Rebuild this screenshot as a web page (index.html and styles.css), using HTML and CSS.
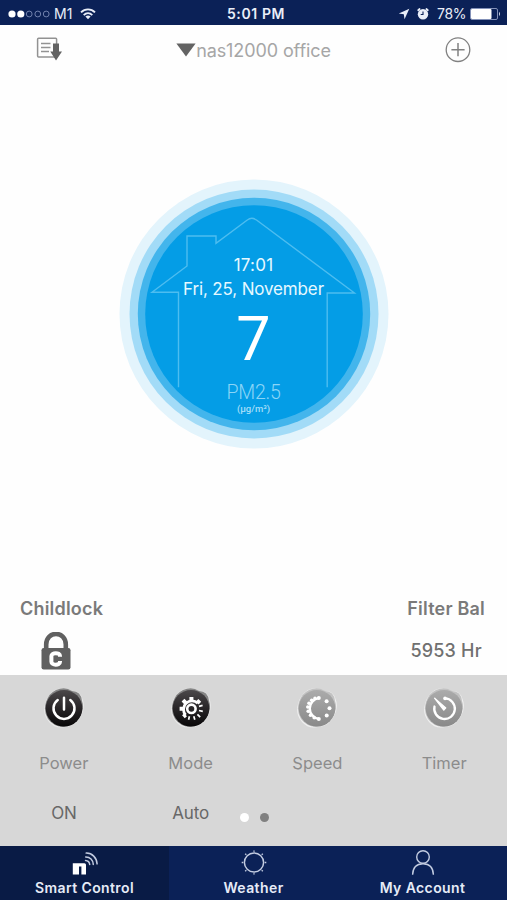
FILE: index.html
```html
<!DOCTYPE html>
<html lang="en">
<head>
  <title>Smart Control</title>
  <meta charset="UTF-8">
  <meta name="viewport" content="width=device-width, initial-scale=1">
  <link rel="stylesheet" href="styles.css">
</head>
<body>
  <div class="status-bar">
    <div class="status-left">
      <svg class="signal" width="42" height="10" viewBox="0 0 42 10">
        <g fill="#fff"><circle cx="4" cy="5" r="3.6"/><circle cx="12.8" cy="5" r="3.6"/></g>
        <g fill="none" stroke="#7c8bb5" stroke-width="0.9"><circle cx="21.2" cy="5" r="2.9"/><circle cx="29.8" cy="5" r="2.9"/><circle cx="38.2" cy="5" r="2.9"/></g>
      </svg>
      <span class="carrier">M1</span>
      <svg class="wifi" width="16" height="12" viewBox="0 0 16 12">
        <g fill="none" stroke="#e9eef8" stroke-width="1.9">
          <path d="M1 4.4C5 .4 11 .4 15 4.4"/>
          <path d="M3.7 7.1C6.2 4.7 9.8 4.7 12.3 7.1"/>
        </g>
        <path fill="#e9eef8" d="M5.4 8.6Q8 6.6 10.6 8.6L8 11.3Z"/>
      </svg>
    </div>
    <div class="clock">5:01 PM</div>
    <div class="status-right">
      <svg width="12" height="12" viewBox="0 0 12 12"><path fill="#e9eef8" d="M11.3.7 6.5 11.3 5.8 6.3.8 5.6Z"/></svg>
      <svg class="alarm" width="14" height="14" viewBox="0 0 14 14">
        <g stroke="#e9eef8" stroke-width="1.8" stroke-linecap="round"><path d="M2.2 3.2 3.6 2M11.8 3.2 10.4 2"/></g>
        <circle cx="7" cy="7.3" r="5.2" fill="#e9eef8"/>
        <path d="M7 4.4V7.5H4.7" fill="none" stroke="#0b2157" stroke-width="1.1"/>
      </svg>
      <span class="percent">78%</span>
      <svg class="battery" width="31" height="12" viewBox="0 0 31 12">
        <rect x=".5" y=".5" width="27" height="11" rx="1.5" fill="none" stroke="#8391b8"/>
        <rect x="1" y="1" width="20.5" height="10" rx="1" fill="#fff"/>
        <path d="M29 3.8Q31 6 29 8.2Z" fill="#d5dcec"/>
      </svg>
    </div>
  </div>

  <div class="header">
    <svg class="icon-list" width="26" height="26" viewBox="0 0 26 26">
      <rect x="1.6" y="1.2" width="19" height="18.8" rx="1" fill="none" stroke="#929292" stroke-width="1.5"/>
      <path d="M5 6.5H14.5M5 10.5H14.5M5 14.5H13" stroke="#929292" stroke-width="1.3"/>
      <path fill="#636363" d="M17 6.5H23V14.6H26L20 23.6 14.3 14.6H17Z"/>
    </svg>
    <div class="device-name">
      <svg width="20" height="14" viewBox="0 0 20 14"><path fill="#636363" d="M.4.5H19.6L10 13.6Z"/></svg>
      <span>nas12000 office</span>
    </div>
    <svg class="icon-add" width="26" height="26" viewBox="0 0 26 26" fill="none" stroke="#818181">
      <circle cx="13" cy="12.7" r="11.8" stroke-width="1.3"/>
      <path d="M13 6.1V19.3M6.4 12.7H19.6" stroke-width="1.5"/>
    </svg>
  </div>

  <div class="main">
    <div class="dial">
      <svg class="dial-art" width="270" height="270" viewBox="0 0 270 270">
        <circle cx="135" cy="135" r="134.5" fill="#e3f4fc"/>
        <circle cx="135" cy="135" r="124.5" fill="#a2dbf7"/>
        <circle cx="135" cy="135" r="116.2" fill="#43b5ec"/>
        <circle cx="135" cy="135" r="108.8" fill="#049de6"/>
        <path d="M59.5 208.3V113.2H33L68 87V57H97V64.3L128.3 41Q132.8 37.5 137.5 41L235.5 114H208.2V208.3" fill="none" stroke="#4dbdf0" stroke-width="1.4"/>
      </svg>
      <div class="dial-time">17:01</div>
      <div class="dial-date">Fri, 25, November</div>
      <div class="dial-value">7</div>
      <div class="dial-label">PM2.5</div>
      <div class="dial-unit">(μg/m³)</div>
    </div>
  </div>

  <div class="info">
    <div class="info-item">
      <div class="info-title childlock">Childlock</div>
      <svg class="lock" width="30" height="38" viewBox="0 0 30 38">
        <path d="M5.2 17V12.5C5.2-1.6 24.8-1.6 24.8 12.5V17" fill="none" stroke="#606060" stroke-width="4.6"/>
        <rect x=".5" y="16" width="29" height="21.5" rx="2.2" fill="#606060"/>
        <path d="M19 24.7V23.9C19 20.2 10.4 20.2 10.4 24V29.7C10.4 33.6 19 33.6 19 29.8V28.9" fill="none" stroke="#fff" stroke-width="4"/>
      </svg>
    </div>
    <div class="info-item right">
      <div class="info-title">Filter Bal</div>
      <div class="info-value">5953 Hr</div>
    </div>
  </div>

  <div class="controls">
    <div class="control">
      <svg class="knob" width="42" height="42" viewBox="0 0 42 42">
        <defs>
          <linearGradient id="dark" x1="0" y1="0" x2="0" y2="1"><stop offset="0" stop-color="#4b484a"/><stop offset=".5" stop-color="#282527"/><stop offset="1" stop-color="#080708"/></linearGradient>
          <linearGradient id="light" x1="0" y1="0" x2="0" y2="1"><stop offset="0" stop-color="#ababab"/><stop offset="1" stop-color="#898989"/></linearGradient>
        </defs>
        <path d="M12 3Q20-1 28 4Q37 3 39.5 12Q43 20 38 29Q33 39 24 39.5Q13 43 6 35Q-1 27 2 17Q4 8 12 3Z" fill="#e9e9e9"/>
        <path d="M13 3Q22-1 29 4Q38 4 39 14Q42 22 36 31Q30 39 20 40Q10 39 5 32Q0 24 3 15Q6 6 13 3Z" fill="#858585"/>
        <circle cx="21" cy="21.3" r="18.3" fill="url(#dark)"/>
        <path d="M14.7 13A10.5 10.5 0 1 0 27.3 13M21 10.8V22.5" fill="none" stroke="#fff" stroke-width="2.5" stroke-linecap="round"/>
      </svg>
      <div class="control-name">Power</div>
      <div class="control-state">ON</div>
    </div>
    <div class="control">
      <svg class="knob" width="42" height="42" viewBox="0 0 42 42">
        <path d="M12 3Q20-1 28 4Q37 3 39.5 12Q43 20 38 29Q33 39 24 39.5Q13 43 6 35Q-1 27 2 17Q4 8 12 3Z" fill="#e9e9e9"/>
        <path d="M13 3Q22-1 29 4Q38 4 39 14Q42 22 36 31Q30 39 20 40Q10 39 5 32Q0 24 3 15Q6 6 13 3Z" fill="#858585"/>
        <circle cx="21" cy="21.3" r="18.3" fill="url(#dark)"/>
        <g fill="none" stroke="#fff">
          <circle cx="21.4" cy="21.8" r="4.2" stroke-width="2.6"/>
          <path d="M15.6 28A8.5 8.5 0 0 1 27.8 16.2" stroke-width="2.8"/>
          <path d="M15.6 27.8 13.4 29.8M13.4 21.8H9.6M15.8 16 13 13.2M21.4 13.8V10M27.2 16 29.8 13.4" stroke-width="4"/>
          <path d="M29 19.4 32.6 18.4M29 23.5 32.8 24.4M27.4 27.4 30.2 30.2M23.8 29.2 24.8 32.8M19.4 29.2 18.6 32.8" stroke-width="1.7"/>
        </g>
      </svg>
      <div class="control-name">Mode</div>
      <div class="control-state">Auto</div>
    </div>
    <div class="control">
      <svg class="knob" width="42" height="42" viewBox="0 0 42 42">
        <path d="M12 3Q20-1 28 4Q37 3 39.5 12Q43 20 38 29Q33 39 24 39.5Q13 43 6 35Q-1 27 2 17Q4 8 12 3Z" fill="#f0f0f0"/>
        <path d="M13 3Q22-1 29 4Q38 4 39 14Q42 22 36 31Q30 39 20 40Q10 39 5 32Q0 24 3 15Q6 6 13 3Z" fill="#c2c2c2"/>
        <circle cx="21" cy="21.3" r="18.3" fill="url(#light)"/>
        <path d="M22.8 11.1A10.5 10.5 0 0 0 22.8 31.9" fill="none" stroke="#fff" stroke-width="2.4"/>
        <g fill="#fff"><circle cx="22.8" cy="11.1" r="2"/><circle cx="19" cy="11.4" r="1.8"/><circle cx="15.7" cy="13.3" r="1.8"/><circle cx="13" cy="16.2" r="1.8"/><circle cx="11.8" cy="20" r="1.8"/><circle cx="12.2" cy="24.2" r="1.8"/><circle cx="14.5" cy="28.2" r="1.8"/><circle cx="18.2" cy="30.8" r="1.8"/><circle cx="22.8" cy="31.9" r="2"/><circle cx="30.6" cy="14.3" r="2"/><circle cx="33.5" cy="21.3" r="2"/><circle cx="30.7" cy="28.4" r="2"/></g>
      </svg>
      <div class="control-name">Speed</div>
      <div class="control-state"></div>
    </div>
    <div class="control">
      <svg class="knob" width="42" height="42" viewBox="0 0 42 42">
        <path d="M12 3Q20-1 28 4Q37 3 39.5 12Q43 20 38 29Q33 39 24 39.5Q13 43 6 35Q-1 27 2 17Q4 8 12 3Z" fill="#f0f0f0"/>
        <path d="M13 3Q22-1 29 4Q38 4 39 14Q42 22 36 31Q30 39 20 40Q10 39 5 32Q0 24 3 15Q6 6 13 3Z" fill="#c2c2c2"/>
        <circle cx="21" cy="21.3" r="18.3" fill="url(#light)"/>
        <path d="M22 11.4A10.3 10.3 0 1 1 11.5 19.5" fill="none" stroke="#fff" stroke-width="2.3" stroke-linecap="round"/>
        <circle cx="22" cy="11.4" r="1.8" fill="#fff"/>
        <path d="M11.6 11.2 22.8 20.9 20.8 23Z" fill="#fff" stroke="#fff" stroke-width="1.3" stroke-linejoin="round"/>
      </svg>
      <div class="control-name">Timer</div>
      <div class="control-state"></div>
    </div>
    <div class="pager">
      <span class="dot active"></span>
      <span class="dot"></span>
    </div>
  </div>

  <div class="tabs">
    <div class="tab active">
      <svg width="28" height="28" viewBox="0 0 28 28">
        <path fill="#fff" d="M1.8 13.2H13.4Q15 13.2 15 14.8V24.6H10.4V16.6H8V24.6H1.8Z"/>
        <g fill="none" stroke="#c3cce1" stroke-width="1.5" stroke-linecap="round">
          <path d="M15.2 3.1C21 2.9 25.8 7.8 26.1 13.9"/>
          <path d="M14.7 6.9C19 6.8 22.1 10 22.3 14.4"/>
          <path d="M14.5 10.4C16.7 10.5 18.5 12.2 18.7 14.5"/>
        </g>
      </svg>
      <span>Smart Control</span>
    </div>
    <div class="tab">
      <svg width="28" height="28" viewBox="0 0 28 28" fill="none" stroke="#c3cce1">
        <circle cx="14" cy="12.5" r="9.6" stroke-width="1.5"/>
        <path d="M14 1.8V.4M14 23.2V24.6M3.3 12.5H1.7M24.7 12.5H26.3M6.3 4.8 5.2 3.7M21.7 4.8 22.8 3.7M6.3 20.2 5.2 21.3M21.7 20.2 22.8 21.3" stroke-width="1.4"/>
      </svg>
      <span>Weather</span>
    </div>
    <div class="tab">
      <svg width="28" height="28" viewBox="0 0 28 28" fill="none" stroke="#c3cce1" stroke-width="1.4">
        <circle cx="14" cy="7" r="6.3"/>
        <path d="M3.6 24.8C3.9 17.6 7.9 13.8 14 13.8S24.1 17.6 24.4 24.8"/>
      </svg>
      <span>My Account</span>
    </div>
  </div>
</body>
</html>
```
FILE: styles.css
```css
body {
  width: 507px;
  height: 900px;
  margin: 0;
  display: flex;
  flex-direction: column;
  overflow: hidden;
  font-family: Inter, "Liberation Sans", sans-serif;
  background: #fefefe;
  color: #707070;
}

svg {
  display: block;
  flex-shrink: 0;
}

/* status bar */
.status-bar {
  box-sizing: border-box;
  height: 25px;
  padding: 2px 6px 0 8px;
  display: grid;
  grid-template-columns: 1fr auto 1fr;
  align-items: center;
  background: #0b2157;
  color: #e9eef8;
  font-size: 14px;
}

.status-left,
.status-right {
  display: flex;
  align-items: center;
}

.status-right {
  justify-content: flex-end;
}

.carrier {
  margin-left: 4px;
}

.wifi {
  margin-left: 8px;
}

.clock {
  padding-left: 3px;
  font-weight: 600;
  letter-spacing: 0.6px;
}

.alarm {
  margin-left: 6px;
}

.percent {
  margin: 0 4px 0 7px;
  letter-spacing: -0.4px;
}

/* header */
.header {
  box-sizing: border-box;
  height: 50px;
  padding: 0 36px;
  display: flex;
  justify-content: space-between;
  align-items: center;
}

.device-name {
  display: flex;
  align-items: center;
  color: #a6a6a6;
  font-size: 18px;
  letter-spacing: -0.1px;
}

/* dial */
.main {
  height: 513px;
  display: flex;
  justify-content: center;
}

.dial {
  position: relative;
  width: 270px;
  height: 270px;
  margin-top: 104px;
  text-align: center;
  color: #e6f8ff;
}

.dial-art {
  position: absolute;
  top: 0;
  left: 0;
}

.dial-time,
.dial-date,
.dial-value,
.dial-label,
.dial-unit {
  position: relative;
}

.dial-time {
  padding-top: 74px;
  font-size: 17px;
  line-height: 24px;
  letter-spacing: 0.2px;
}

.dial-date {
  font-size: 17px;
  line-height: 24px;
  letter-spacing: -0.15px;
}

.dial-value {
  font-family: Roboto, sans-serif;
  font-size: 61px;
  line-height: 76px;
  color: #fff;
}

.dial-label {
  margin-top: 5px;
  font-family: Roboto, sans-serif;
  font-weight: 300;
  font-size: 19.5px;
  line-height: 22px;
  letter-spacing: -0.2px;
  color: #8bd5f7;
}

.dial-unit {
  font-family: Roboto, sans-serif;
  font-size: 9.5px;
  font-weight: 500;
  line-height: 10px;
  color: #a6dff9;
}

/* childlock and filter */
.info {
  box-sizing: border-box;
  height: 87px;
  padding: 9px 22px 0 20px;
  display: flex;
  justify-content: space-between;
}

.info-title {
  font-size: 18px;
  line-height: 24px;
  font-weight: 600;
  letter-spacing: 0.2px;
  color: #7a7a7a;
}

.info-item.right {
  text-align: center;
}

.info-value {
  margin-top: 18px;
  font-size: 18px;
  line-height: 24px;
  font-weight: 500;
  letter-spacing: 0.2px;
}

.lock {
  margin: 11px 0 0 21px;
}

/* control panel */
.controls {
  position: relative;
  height: 171px;
  display: grid;
  grid-template-columns: repeat(4, 1fr);
  background: #d7d7d7;
}

.control {
  padding: 12px 0 0 1px;
  display: flex;
  flex-direction: column;
  align-items: center;
  font-size: 17px;
  line-height: 24px;
}

.control-name {
  margin-top: 22px;
  font-size: 16.5px;
  color: #8c8c8c;
}

.control-state {
  margin-top: 26px;
  color: #686868;
  letter-spacing: -0.2px;
}

.pager {
  position: absolute;
  left: 1px;
  right: 0;
  bottom: 24px;
  display: flex;
  justify-content: center;
  gap: 11px;
}

.dot {
  width: 9px;
  height: 9px;
  border-radius: 50%;
  background: #808080;
}

.dot.active {
  background: #fff;
}

/* bottom tabs */
.tabs {
  height: 54px;
  display: grid;
  grid-template-columns: repeat(3, 1fr);
  background: #0b2157;
}

.tab {
  padding-top: 4px;
  display: flex;
  flex-direction: column;
  align-items: center;
  color: #e6ebf7;
  font-size: 14px;
  font-weight: 600;
  letter-spacing: 0.4px;
  line-height: 19px;
}

.tab.active {
  background: #091b45;
}
```
